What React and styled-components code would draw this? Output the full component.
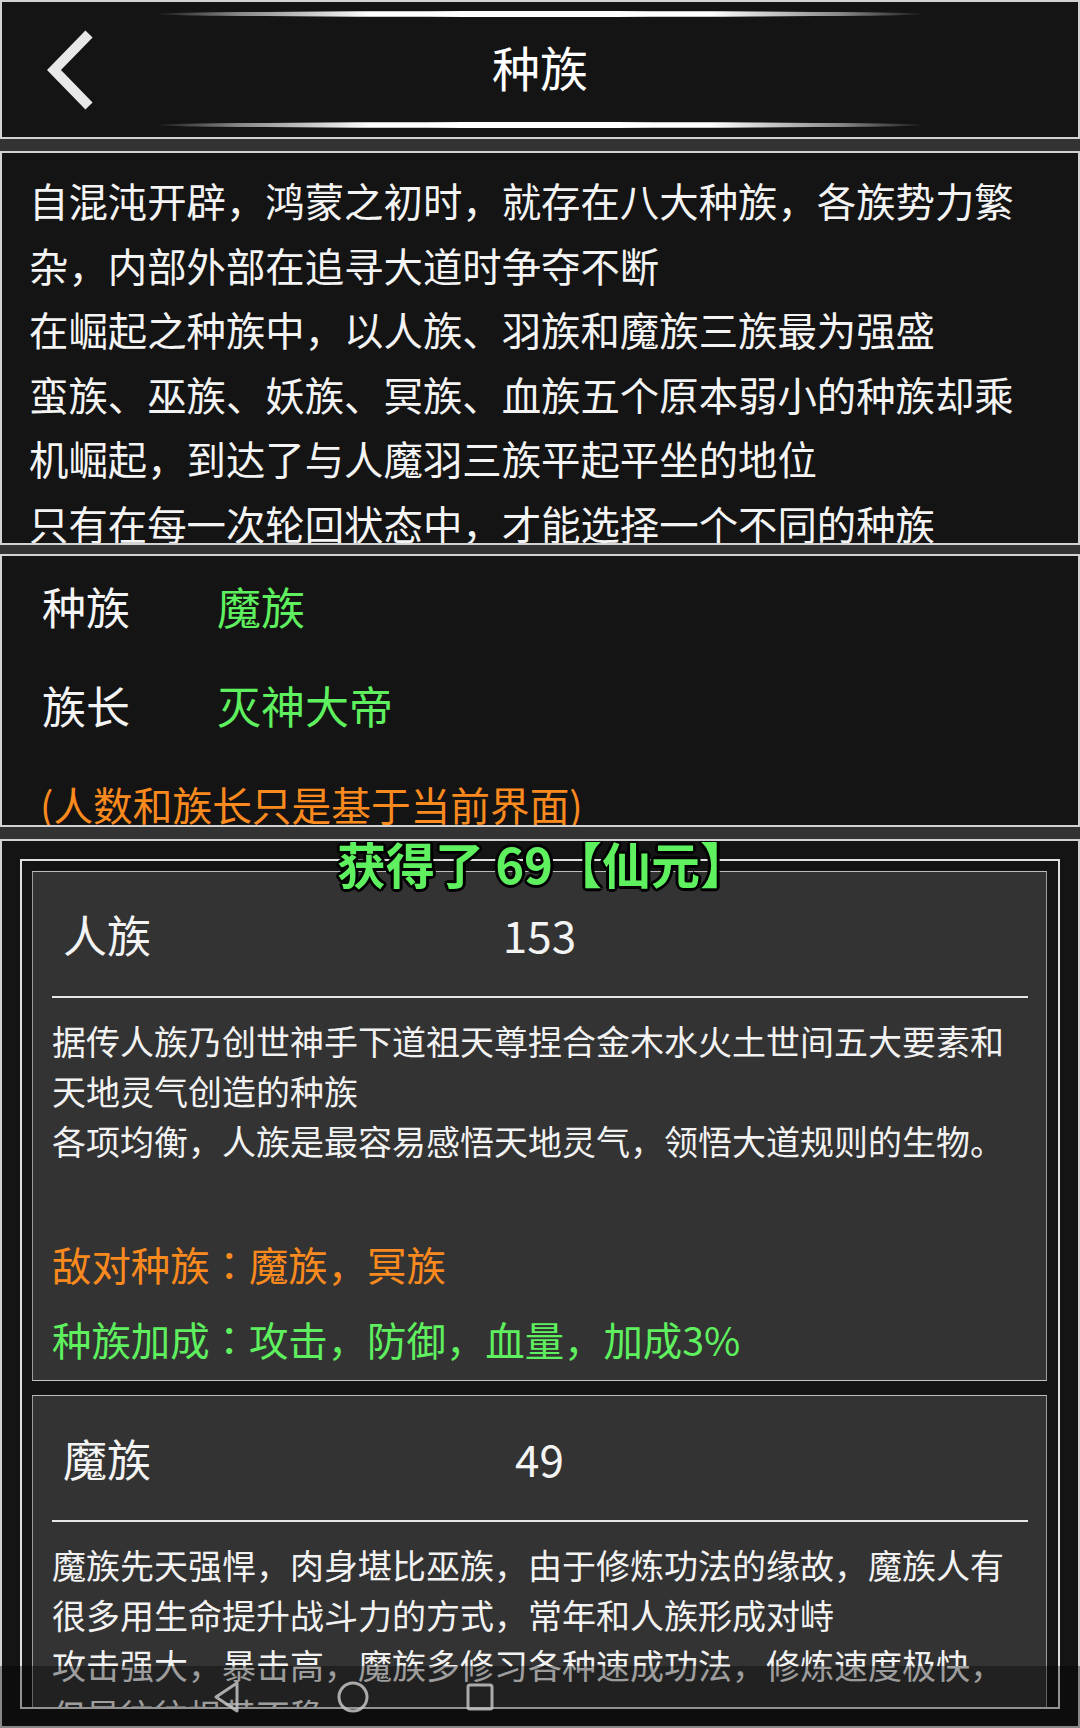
import React from "react";
import styled, { createGlobalStyle } from "styled-components";

const GlobalStyle = createGlobalStyle`
  html, body {
    margin: 0;
    padding: 0;
    background: #333333;
  }
  body {
    font-family: "Noto Sans CJK SC", "Noto Sans", sans-serif;
    color: #f2f2f2;
  }
  * { box-sizing: border-box; }
`;

const GREEN = "#5ff05f";
const ORANGE = "#fb8a1e";

const intro = [
  "自混沌开辟，鸿蒙之初时，就存在八大种族，各族势力繁杂，内部外部在追寻大道时争夺不断",
  "在崛起之种族中，以人族、羽族和魔族三族最为强盛",
  "蛮族、巫族、妖族、冥族、血族五个原本弱小的种族却乘机崛起，到达了与人魔羽三族平起平坐的地位",
  "只有在每一次轮回状态中，才能选择一个不同的种族",
];

const races = [
  {
    name: "人族",
    count: 153,
    desc: [
      "据传人族乃创世神手下道祖天尊捏合金木水火土世间五大要素和天地灵气创造的种族",
      "各项均衡，人族是最容易感悟天地灵气，领悟大道规则的生物。",
    ],
    enemy: ["敌对种族", "魔族，冥族"],
    bonus: ["种族加成", "攻击，防御，血量，加成3%"],
  },
  {
    name: "魔族",
    count: 49,
    desc: [
      "魔族先天强悍，肉身堪比巫族，由于修炼功法的缘故，魔族人有很多用生命提升战斗力的方式，常年和人族形成对峙",
      "攻击强大，暴击高，魔族多修习各种速成功法，修炼速度极快，但是往往根基不稳",
    ],
    enemy: ["敌对种族", "人族，羽族"],
    bonus: ["种族加成", "攻击，暴击，加成3%"],
  },
];

const App = () => {
  return (
    <Page>
      <GlobalStyle />
      <Header $h={139}>
        <Glow />
        <TitleRow>
          <Back>
            <svg width="50" height="80" viewBox="0 0 50 80">
              <polyline
                points="44,4 9,40 44,76"
                fill="none"
                stroke="#e8e8e8"
                strokeWidth="10"
                strokeLinejoin="miter"
              />
            </svg>
          </Back>
          <Title>种族</Title>
          <span />
        </TitleRow>
        <Glow />
      </Header>

      <IntroPanel $h={394} $mt={12}>
        {intro.map((t) => (
          <p key={t}>{t}</p>
        ))}
      </IntroPanel>

      <InfoPanel $h={273} $mt={9}>
        <InfoRow>
          <Label>种族</Label>
          <Value>魔族</Value>
        </InfoRow>
        <InfoRow>
          <Label>族长</Label>
          <Value>灭神大帝</Value>
        </InfoRow>
        <Note>(人数和族长只是基于当前界面)</Note>
      </InfoPanel>

      <ListPanel $h={889} $mt={12}>
        <Toast>获得了 69【仙元】</Toast>
        <Frame>
          {races.map((r) => (
            <Card key={r.name}>
              <CardHead>
                <Name>{r.name}</Name>
                <Count>{r.count}</Count>
                <span />
              </CardHead>
              <Divider />
              <Desc>
                {r.desc.map((d) => (
                  <p key={d}>{d}</p>
                ))}
              </Desc>
              <Stat $color={ORANGE} $mt={60}>
                {r.enemy[0]}
                <Colon>：</Colon>
                {r.enemy[1]}
              </Stat>
              <Stat $color={GREEN}>
                {r.bonus[0]}
                <Colon>：</Colon>
                {r.bonus[1]}
              </Stat>
            </Card>
          ))}
        </Frame>
      </ListPanel>

      <NavBar>
        <NavIcon>
          <svg width="27" height="32" viewBox="0 0 27 32">
            <polygon points="24,2 3,16 24,30" fill="none" stroke="#c4c4c4" strokeWidth="3" strokeLinejoin="round" />
          </svg>
        </NavIcon>
        <NavIcon>
          <svg width="32" height="32" viewBox="0 0 32 32">
            <circle cx="16" cy="16" r="14" fill="none" stroke="#c4c4c4" strokeWidth="3" />
          </svg>
        </NavIcon>
        <NavIcon>
          <svg width="28" height="28" viewBox="0 0 28 28">
            <rect x="2" y="2" width="24" height="24" rx="2" fill="none" stroke="#c4c4c4" strokeWidth="3" />
          </svg>
        </NavIcon>
      </NavBar>
    </Page>
  );
};

const Page = styled.div`
  position: relative;
  width: 1080px;
  height: 1728px;
  overflow: hidden;
  display: flex;
  flex-direction: column;
  background: #333333;
`;

const Panel = styled.section`
  position: relative;
  flex: none;
  height: ${(p) => p.$h}px;
  margin-top: ${(p) => p.$mt || 0}px;
  background: #141414;
  border: 2px solid #d2d2d2;
  overflow: hidden;
`;

const Header = styled(Panel)`
  display: flex;
  flex-direction: column;
  padding: 9px 0 9px;
`;

const Glow = styled.div`
  flex: none;
  width: 776px;
  height: 6px;
  margin: 0 auto;
  border-radius: 50%;
  background: linear-gradient(
    90deg,
    rgba(255, 255, 255, 0) 0%,
    rgba(255, 255, 255, 0.45) 10%,
    #ffffff 28%,
    #ffffff 72%,
    rgba(255, 255, 255, 0.45) 90%,
    rgba(255, 255, 255, 0) 100%
  );
  filter: blur(0.7px);
`;

const TitleRow = styled.div`
  flex: 1;
  display: grid;
  grid-template-columns: 1fr auto 1fr;
  align-items: center;
`;

const Back = styled.div`
  display: flex;
  align-items: center;
  padding-left: 43px;
`;

const Title = styled.h1`
  margin: 0 0 8px;
  font-size: 48px;
  font-weight: 400;
  color: #ffffff;
  line-height: 1;
`;

const IntroPanel = styled(Panel)`
  padding: 15px 44px 0 27px;
  font-size: 39.4px;
  line-height: 64.6px;
  color: #f4f4f4;

  p {
    margin: 0;
  }
`;

const InfoPanel = styled(Panel)`
  display: flex;
  flex-direction: column;
`;

const InfoRow = styled.div`
  flex: none;
  height: 99px;
  display: flex;
  align-items: center;
  padding-left: 40px;
  font-size: 44px;
`;

const Label = styled.span`
  width: 175px;
  color: #f4f4f4;
`;

const Value = styled.span`
  color: ${GREEN};
`;

const Note = styled.div`
  flex: none;
  height: 99px;
  display: flex;
  align-items: center;
  padding-left: 38px;
  font-size: 39.7px;
  color: ${ORANGE};
`;

const ListPanel = styled(Panel)`
  padding: 18px 18px 17px 18px;
`;

const Toast = styled.div`
  position: absolute;
  top: -4px;
  left: 50%;
  transform: translateX(calc(-50% + 3px));
  z-index: 2;
  white-space: nowrap;
  font-size: 49px;
  line-height: 52px;
  font-weight: 700;
  color: ${GREEN};
  text-shadow:
    -3px 0 0 #000, 3px 0 0 #000, 0 -3px 0 #000, 0 3px 0 #000,
    -2px -2px 0 #000, 2px -2px 0 #000, -2px 2px 0 #000, 2px 2px 0 #000;
`;

const Frame = styled.div`
  height: 100%;
  border: 2px solid #e0e0e0;
  padding: 10px 11px 0 10px;
  overflow: hidden;
  display: flex;
  flex-direction: column;
  gap: 14px;
`;

const Card = styled.div`
  flex: none;
  background: #333333;
  border: 1px solid #9c9c9c;
  border-top-color: #bdbdbd;
  border-bottom-color: #c4c4c4;
  padding-bottom: 4px;
`;

const CardHead = styled.div`
  height: 124px;
  display: grid;
  grid-template-columns: 1fr auto 1fr;
  align-items: center;
  font-size: 44px;
  color: #f4f4f4;
`;

const Name = styled.span`
  padding-left: 30px;
`;

const Count = styled.span``;

const Divider = styled.div`
  height: 2px;
  margin: 0 18px 0 19px;
  background: #e6e6e6;
`;

const Desc = styled.div`
  padding: 18px 18px 0 19px;
  font-size: 34px;
  line-height: 50px;
  color: #f2f2f2;

  p {
    margin: 0;
  }
`;

const Stat = styled.div`
  margin-top: ${(p) => p.$mt || 0}px;
  height: 75px;
  padding-left: 19px;
  font-size: 39.4px;
  line-height: 75px;
  color: ${(p) => p.$color};
`;

const Colon = styled.span`
  font-family: "Noto Sans CJK JP", "Noto Sans CJK SC", sans-serif;
`;

const NavBar = styled.div`
  position: absolute;
  left: 0;
  right: 0;
  bottom: 0;
  height: 62px;
  z-index: 3;
  display: flex;
  align-items: center;
  gap: 67px;
  padding-left: 196px;
  background: rgba(0, 0, 0, 0.35);
`;

const NavIcon = styled.div`
  width: 60px;
  display: flex;
  justify-content: center;
  align-items: center;
  opacity: 0.85;
`;

export default App;
